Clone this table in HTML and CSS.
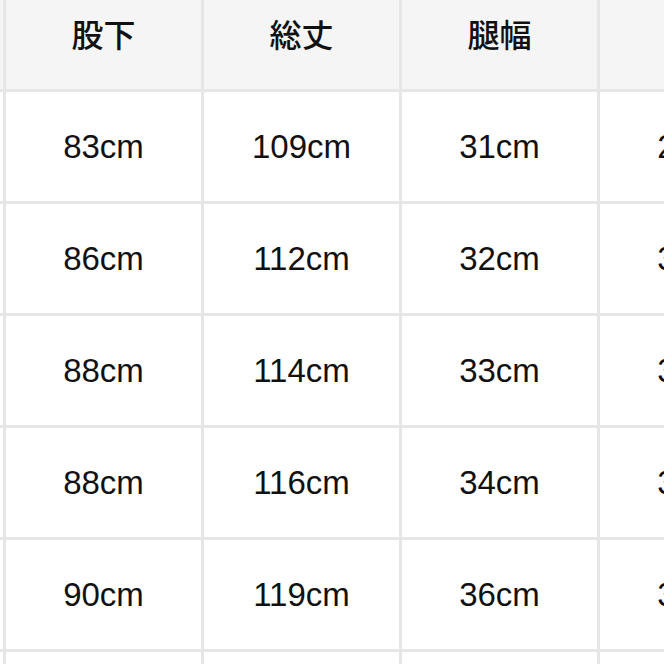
FILE: index.html
```html
<!DOCTYPE html>
<html lang="ja">
<head>
<meta charset="utf-8">
<link rel="stylesheet" href="styles.css">
</head>
<body>
<div class="viewport">
  <div class="sheet">
    <div class="cell head"></div>
    <div class="cell head">股下</div>
    <div class="cell head">総丈</div>
    <div class="cell head">腿幅</div>
    <div class="cell head">裾幅</div>

    <div class="cell"></div>
    <div class="cell">83cm</div>
    <div class="cell">109cm</div>
    <div class="cell">31cm</div>
    <div class="cell">29cm</div>

    <div class="cell"></div>
    <div class="cell">86cm</div>
    <div class="cell">112cm</div>
    <div class="cell">32cm</div>
    <div class="cell">30cm</div>

    <div class="cell"></div>
    <div class="cell">88cm</div>
    <div class="cell">114cm</div>
    <div class="cell">33cm</div>
    <div class="cell">31cm</div>

    <div class="cell"></div>
    <div class="cell">88cm</div>
    <div class="cell">116cm</div>
    <div class="cell">34cm</div>
    <div class="cell">32cm</div>

    <div class="cell"></div>
    <div class="cell">90cm</div>
    <div class="cell">119cm</div>
    <div class="cell">36cm</div>
    <div class="cell">33cm</div>

    <div class="cell"></div>
    <div class="cell"></div>
    <div class="cell"></div>
    <div class="cell"></div>
    <div class="cell"></div>
  </div>
</div>
</body>
</html>
```

FILE: styles.css
```css
html, body {
  margin: 0;
  padding: 0;
  background: #ffffff;
}

.viewport {
  width: 664px;
  height: 664px;
  overflow: hidden;
  background: #ffffff;
}

.sheet {
  display: grid;
  grid-template-columns: repeat(5, 195px);
  grid-auto-rows: 109px;
  gap: 3px;
  background: #e6e6e6;
  width: max-content;
  margin-left: -192px;
  margin-top: -20px;
}

.cell {
  background: #ffffff;
  display: flex;
  align-items: center;
  justify-content: center;
  font-family: "Liberation Sans", Arial, sans-serif;
  font-size: 33px;
  color: #111111;
  white-space: nowrap;
}

.cell.head {
  background: #f5f5f5;
  font-family: "Noto Sans CJK JP", "Noto Sans", sans-serif;
  font-weight: 500;
  font-size: 32px;
  padding-bottom: 3px;
  box-sizing: border-box;
}
```
